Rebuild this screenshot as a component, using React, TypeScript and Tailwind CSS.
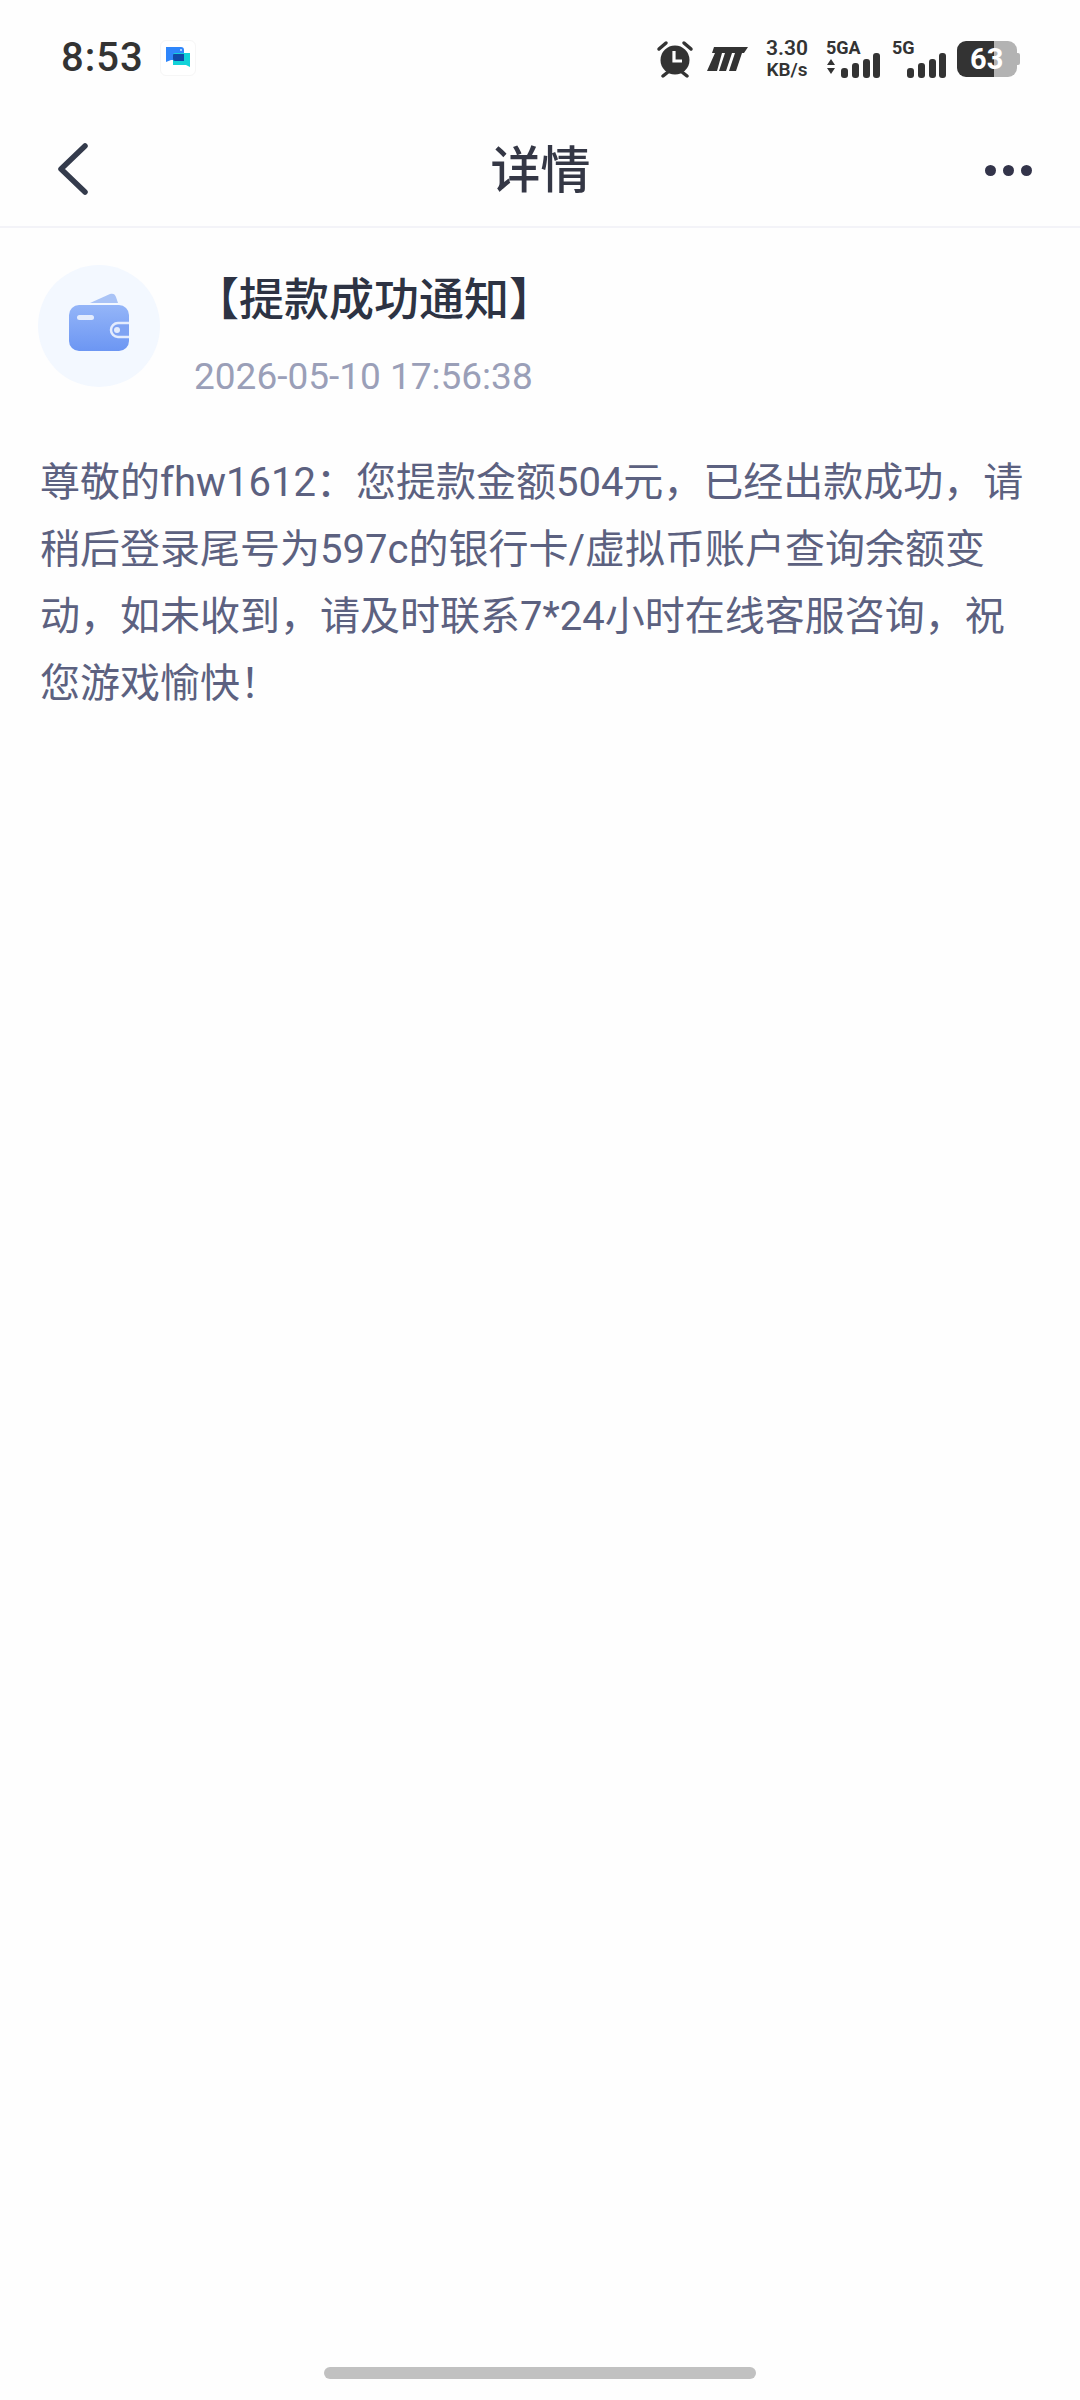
const FONT = "font-['Roboto','Noto_Sans_CJK_SC',sans-serif]";

function ChatIcon() {
  return (
    <div className="w-[36px] h-[36px] rounded-[6px] bg-white border border-[#f6f6f6] flex items-center justify-center">
      <svg width="30" height="30" viewBox="0 0 30 30">
        <path d="M3 4h15a3 3 0 0 1 3 3v10H8l-5 2z" fill="#2f86fb" />
        <path d="M27 10H12a2 2 0 0 0-2 2v10h13l4 2z" fill="#12d2d8" />
        <path d="M11 11h10v7H12a2 2 0 0 1-2-2v-4a1 1 0 0 1 1-1z" fill="#0f49a8" />
        <circle cx="18" cy="7" r="1" fill="#cfe4ff" />
      </svg>
    </div>
  );
}

function Alarm() {
  return (
    <svg width="38" height="38" viewBox="0 0 38 38" fill="none">
      <circle cx="19" cy="20" r="14.5" fill="#333" />
      <path d="M18 11v10h8" stroke="#fff" strokeWidth="3.2" />
      <path d="M3 9l7-6M35 9l-7-6" stroke="#333" strokeWidth="3.5" strokeLinecap="round" />
      <path d="M7 36l5-4M31 36l-5-4" stroke="#333" strokeWidth="3.5" strokeLinecap="round" />
    </svg>
  );
}

function Signal({ arrows }: { arrows?: boolean }) {
  return (
    <svg width="54" height="26" viewBox="0 0 54 26" fill="#333">
      {arrows && <path d="M1 12l4-6 4 6zM1 15h8l-4 6z" />}
      <rect x="15" y="15" width="7" height="10" rx="3" />
      <rect x="26" y="10" width="7" height="15" rx="3" />
      <rect x="37" y="6" width="7" height="19" rx="3" />
      <rect x="47" y="0" width="7" height="25" rx="3" />
    </svg>
  );
}

function Wallet() {
  return (
    <svg className="mb-[9px]" width="60" height="58" viewBox="0 0 60 58" fill="none">
      <defs>
        <linearGradient id="wb" x1="0" y1="0" x2="0" y2="1">
          <stop offset="0" stopColor="#94b5f8" />
          <stop offset="1" stopColor="#6c96f3" />
        </linearGradient>
      </defs>
      <path d="M21 10L41 1c3-1 5 0 6 3l2 6z" fill="#a9c3f6" />
      <rect x="0" y="12" width="60" height="46" rx="10" fill="url(#wb)" />
      <rect x="8" y="22" width="17" height="5" rx="2.5" fill="#e4ecfd" />
      <path d="M60 30H49a7 7 0 0 0 0 14h11" fill="#7fa3f3" stroke="#e4ecfd" strokeWidth="2.5" />
      <circle cx="48" cy="37" r="3" fill="#e4ecfd" />
    </svg>
  );
}

export default function App() {
  return (
    <div className={`h-[2400px] w-[1080px] bg-[#fefefe] flex flex-col ${FONT}`}>
      {/* status bar */}
      <div className="h-[116px] pl-[61px] pr-[60px] pt-[38px] flex items-start justify-between">
        <div className="flex items-center gap-[16px]">
          <span className="text-[40px] leading-[40px] font-medium text-[#333] tracking-[1px]">8:53</span>
          <ChatIcon />
        </div>
        <div className="flex items-center text-[#333]">
          <Alarm />
          <svg className="ml-[13px]" width="41" height="24" viewBox="0 0 41 24" fill="#333">
            <path d="M7 0h34l-4 6h-2l-6 18h-7l6-18h-3l-6 18h-7l6-18h-3L10 24H0L8 6H5z" />
          </svg>
          <div className="ml-[16px] w-[46px] flex flex-col items-center font-semibold">
            <span className="text-[21px] leading-[21px]">3.30</span>
            <span className="text-[19px] leading-[21px]">KB/s</span>
          </div>
          <div className="ml-[16px] w-[54px] flex flex-col">
            <span className="text-[18px] leading-[18px] -mb-[4px] font-bold">5GA</span>
            <Signal arrows />
          </div>
          <div className="ml-[12px] w-[54px] flex flex-col">
            <span className="text-[18px] leading-[18px] -mb-[4px] font-bold">5G</span>
            <Signal />
          </div>
          <div className="ml-[11px] relative w-[63px] h-[36px] flex">
            <div className="w-[37px] h-full bg-[#333] rounded-l-[9px]" />
            <div className="w-[23px] h-full bg-[#b3b3b3] rounded-r-[9px]" />
            <div className="w-[3px] h-[12px] self-center bg-[#b3b3b3] rounded-r-[2px]" />
            <span className="absolute left-[13px] top-0 text-[29px] leading-[36px] font-bold text-white">63</span>
          </div>
        </div>
      </div>

      {/* nav bar */}
      <div className="h-[112px] px-[58px] pr-[48px] flex items-center justify-between border-b-2 border-[#f3f3f8]">
        <svg className="mb-[4px]" width="30" height="52" viewBox="0 0 30 52" fill="none">
          <path d="M27 3L3 26l24 23" stroke="#343b4c" strokeWidth="5.5" strokeLinecap="round" strokeLinejoin="round" />
        </svg>
        <h1 className="text-[50px] leading-[56px] font-medium text-[#343745] ml-[8px]">详情</h1>
        <div className="flex gap-[7px] mb-[2px]">
          <span className="w-[11px] h-[11px] rounded-full bg-[#33344a]" />
          <span className="w-[11px] h-[11px] rounded-full bg-[#33344a]" />
          <span className="w-[11px] h-[11px] rounded-full bg-[#33344a]" />
        </div>
      </div>

      {/* message head */}
      <div className="flex-1">
        <div className="pl-[38px] pt-[37px] flex gap-[34px]">
          <div className="w-[122px] h-[122px] rounded-full bg-[#f3f8ff] flex items-center justify-center">
            <Wallet />
          </div>
          <div>
            <div className="text-[45px] leading-[52px] font-medium text-[#2d3343] mt-[10px]">【提款成功通知】</div>
            <div className="text-[37px] leading-[44px] text-[#9a9fb8] mt-[28px]">2026-05-10 17:56:38</div>
          </div>
        </div>
        <p className="mt-[50px] px-[40px] text-[40px] leading-[67px] text-[#5c6180]">
          尊敬的fhw1612：您提款金额504元，已经出款成功，请稍后登录尾号为597c的银行卡/虚拟币账户查询余额变动，如未收到，请及时联系7*24小时在线客服咨询，祝您游戏愉快！
        </p>
      </div>

      {/* home indicator */}
      <div className="mx-auto mb-[21px] w-[432px] h-[12px] rounded-full bg-[#c1c1c1]" />
    </div>
  );
}
